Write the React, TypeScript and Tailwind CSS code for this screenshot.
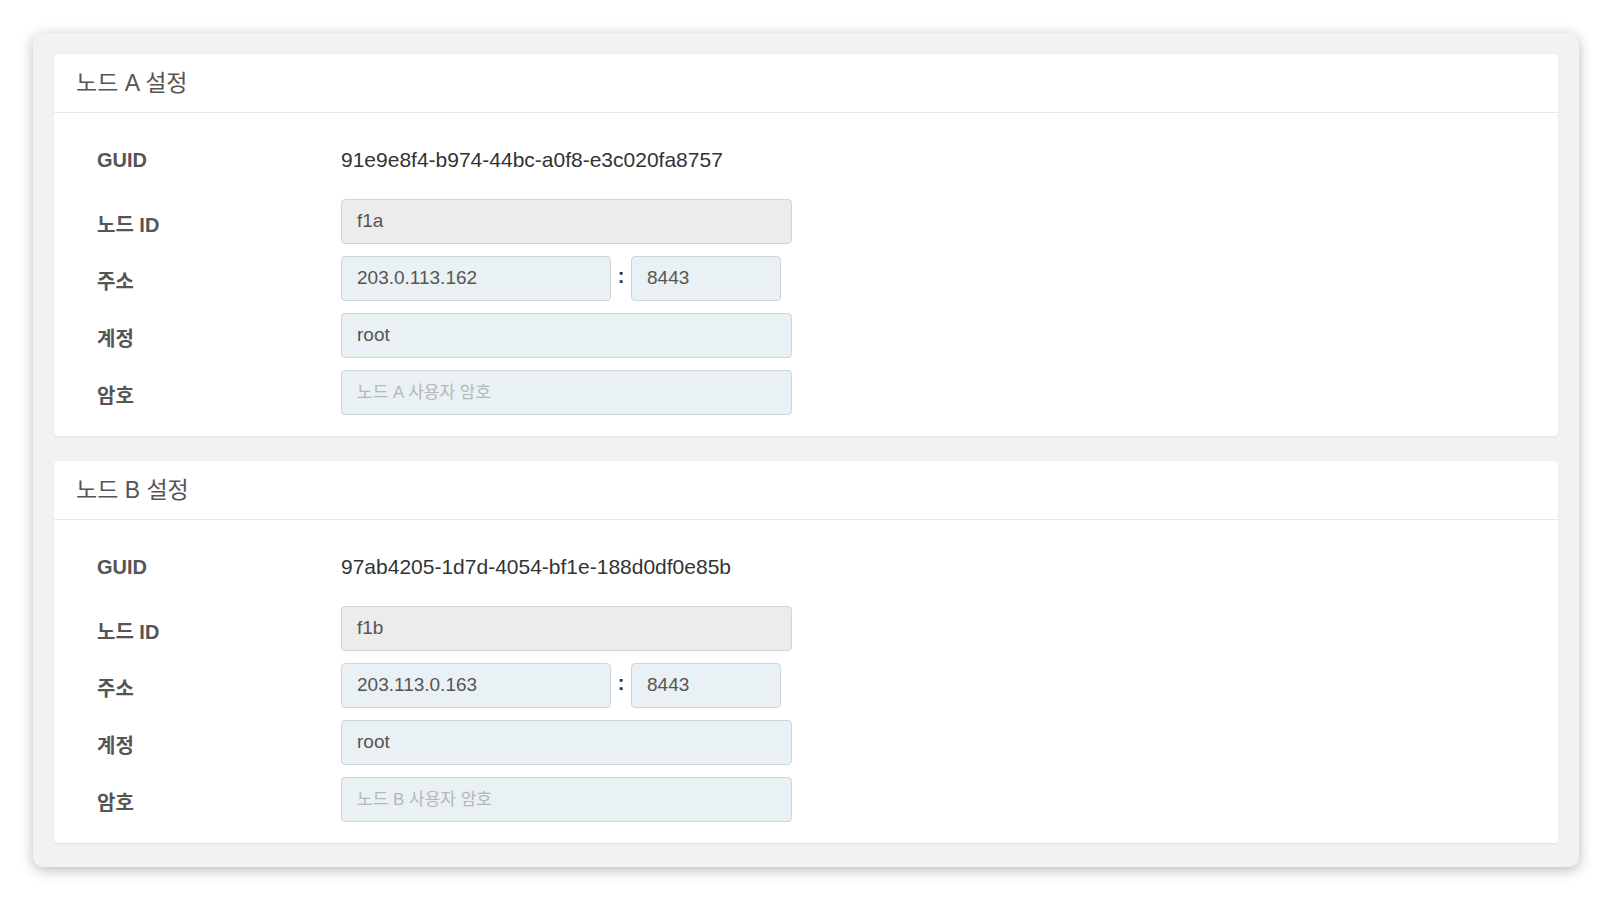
const FONT = "font-['Liberation_Sans','Noto_Sans_CJK_KR',Arial,sans-serif]";

type Node = {
  name: string;
  guid: string;
  nodeId: string;
  host: string;
  port: string;
  account: string;
};

const nodes: Node[] = [
  {
    name: "A",
    guid: "91e9e8f4-b974-44bc-a0f8-e3c020fa8757",
    nodeId: "f1a",
    host: "203.0.113.162",
    port: "8443",
    account: "root",
  },
  {
    name: "B",
    guid: "97ab4205-1d7d-4054-bf1e-188d0df0e85b",
    nodeId: "f1b",
    host: "203.113.0.163",
    port: "8443",
    account: "root",
  },
];

function Label({ children }: { children: React.ReactNode }) {
  return (
    <div className="w-[244px] shrink-0 pt-[6px] text-[20px] font-bold text-[#555555]">
      {children}
    </div>
  );
}

function Field({
  value,
  placeholder,
  disabled,
  width = "w-[451px]",
}: {
  value?: string;
  placeholder?: string;
  disabled?: boolean;
  width?: string;
}) {
  return (
    <div
      className={`${width} h-[45px] flex items-center px-[15px] rounded-[4px] border border-[#cfd5d8] ${
        disabled ? "bg-[#ececec]" : "bg-[#e9f1f4]"
      } ${value ? "text-[19px] text-[#555555]" : "text-[17px] text-[#b4b8ba]"}`}
    >
      {value ?? placeholder}
    </div>
  );
}

function NodeCard({ node }: { node: Node }) {
  return (
    <div className="bg-white rounded-[4px] shadow-[0_1px_2px_rgba(0,0,0,0.08)]">
      <div className="h-[59px] flex items-center px-[22px] border-b border-[#e6e8e8] text-[23px] text-[#555555]">
        노드 {node.name} 설정
      </div>
      <div className="pl-[43px] pt-[32px] pb-[21px]">
        <div className="flex items-center h-[30px]">
          <div className="w-[244px] shrink-0 text-[20px] font-bold text-[#555555]">GUID</div>
          <div className="text-[21px] text-[#333333]">{node.guid}</div>
        </div>
        <div className="mt-[24px] flex flex-col gap-[12px]">
          <div className="flex items-center">
            <Label>노드 ID</Label>
            <Field value={node.nodeId} disabled />
          </div>
          <div className="flex items-center">
            <Label>주소</Label>
            <Field value={node.host} width="w-[270px]" />
            <span className="w-[20px] text-center text-[20px] font-bold text-[#333333] -mt-[6px]">:</span>
            <Field value={node.port} width="w-[150px]" />
          </div>
          <div className="flex items-center">
            <Label>계정</Label>
            <Field value={node.account} />
          </div>
          <div className="flex items-center">
            <Label>암호</Label>
            <Field placeholder={`노드 ${node.name} 사용자 암호`} />
          </div>
        </div>
      </div>
    </div>
  );
}

export default function App() {
  return (
    <div className={`${FONT} min-h-screen bg-white pt-[33px] pl-[33px]`}>
      <div className="w-[1546px] h-[834px] bg-[#f1f3f3] rounded-[10px] shadow-[0_3px_14px_rgba(0,0,0,0.28)] px-[21px] pt-[21px] pb-[24px] flex flex-col gap-[25px]">
        {nodes.map((node) => (
          <NodeCard key={node.name} node={node} />
        ))}
      </div>
    </div>
  );
}
